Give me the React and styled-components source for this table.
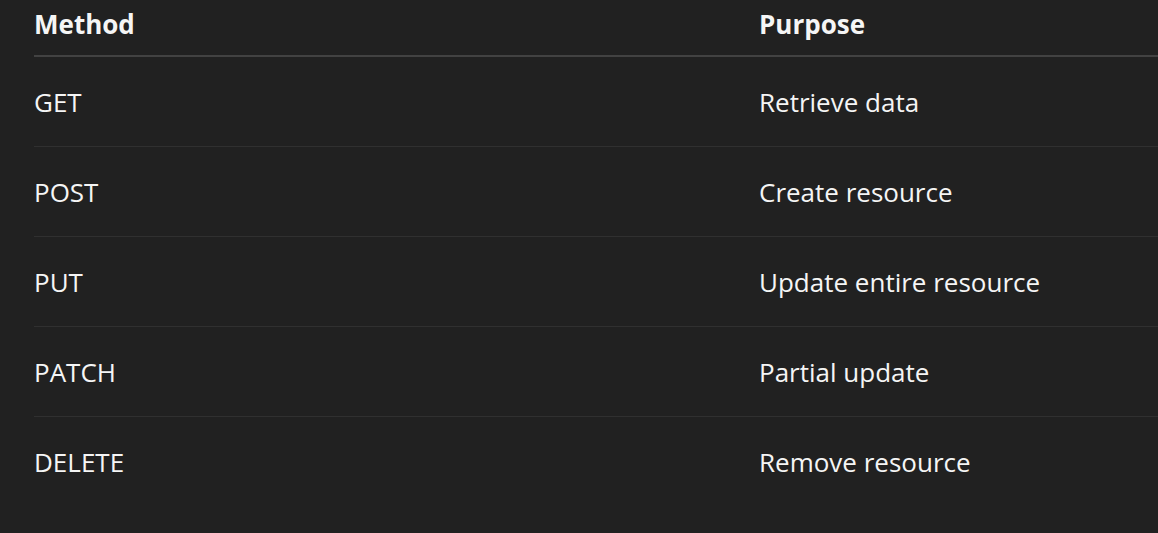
import React from "react";
import styled, { createGlobalStyle } from "styled-components";

const Global = createGlobalStyle`
  html, body { margin: 0; padding: 0; background: #212121; }
  body { font-family: "Open Sans", "Noto Sans", sans-serif; color: #f5f5f5; }
`;

const Page = styled.div`
  padding-left: 34px;
  overflow: hidden;
  width: 1158px;
  height: 533px;
  box-sizing: border-box;
`;

const Table = styled.div`
  display: grid;
  grid-template-columns: 725px 1fr;
  width: 1200px;
`;

const HeadCell = styled.div`
  height: 55px;
  border-bottom: 2px solid #424242;
  display: flex;
  align-items: center;
  padding-bottom: 8px;
  box-sizing: content-box;
  height: 47px;
  font-weight: 700;
  font-size: 26px;
  line-height: 1;
`;

const Cell = styled.div`
  height: 89px;
  display: flex;
  align-items: center;
  font-size: 26px;
  line-height: 1;
  border-bottom: 1px solid ${(p) => (p.$last ? "transparent" : "#303030")};
`;

const rows = [
  ["GET", "Retrieve data"],
  ["POST", "Create resource"],
  ["PUT", "Update entire resource"],
  ["PATCH", "Partial update"],
  ["DELETE", "Remove resource"],
];

export default function App() {
  return (
    <>
      <Global />
      <Page>
        <Table>
          <HeadCell>Method</HeadCell>
          <HeadCell>Purpose</HeadCell>
          {rows.map(([m, p], i) => (
            <React.Fragment key={m}>
              <Cell $last={i === rows.length - 1}>{m}</Cell>
              <Cell $last={i === rows.length - 1}>{p}</Cell>
            </React.Fragment>
          ))}
        </Table>
      </Page>
    </>
  );
}
